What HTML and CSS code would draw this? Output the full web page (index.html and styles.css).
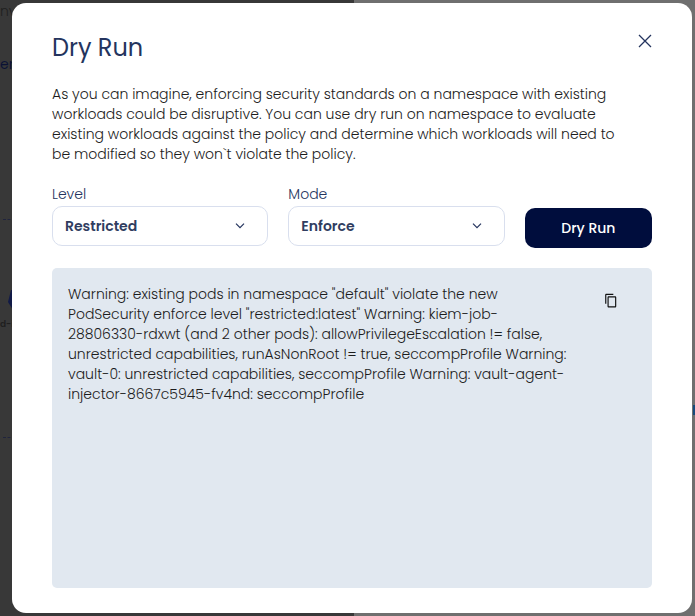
FILE: index.html
```html
<!DOCTYPE html>
<html lang="en">
<head>
<meta charset="utf-8">
<meta name="viewport" content="width=device-width, initial-scale=1">
<title>Dry Run</title>
<link rel="stylesheet" href="styles.css">
</head>
<body>
<div class="backdrop" aria-hidden="true">
  <span class="peek peek-env">nv</span>
  <span class="peek peek-users">ers</span>
  <span class="dash dash-top"></span>
  <svg class="hex" width="16" height="20" viewBox="0 0 16 20"><path d="M3 0h13v20H5L0 12z" fill="#111a47"/></svg>
  <span class="peek peek-node">d-in</span>
  <span class="dash dash-bottom"></span>
  <span class="marker"></span>
</div>
<main class="modal" role="dialog" aria-labelledby="title">
  <header class="modal-header">
    <h1 id="title">Dry Run</h1>
    <button class="icon-button close" type="button" aria-label="Close">
      <svg width="14" height="14" viewBox="0 0 14 14" fill="none" stroke="#24345e" stroke-width="1.3"><path d="M1 1l12 12M13 1L1 13"/></svg>
    </button>
  </header>
  <p class="intro">As you can imagine, enforcing security standards on a namespace with existing<br>
    workloads could be disruptive. You can use dry run on namespace to evaluate<br>
    existing workloads against the policy and determine which workloads will need to<br>
    be modified so they won`t violate the policy.</p>
  <form class="controls">
    <div class="field">
      <label for="level">Level</label>
      <div class="select">
        <select id="level"><option>Restricted</option></select>
        <svg class="chevron" width="10" height="6" viewBox="0 0 10 6" fill="none" stroke="#24345e" stroke-width="1.2"><path d="M1 .7l4 4 4-4"/></svg>
      </div>
    </div>
    <div class="field">
      <label for="mode">Mode</label>
      <div class="select">
        <select id="mode"><option>Enforce</option></select>
        <svg class="chevron" width="10" height="6" viewBox="0 0 10 6" fill="none" stroke="#24345e" stroke-width="1.2"><path d="M1 .7l4 4 4-4"/></svg>
      </div>
    </div>
    <button class="run" type="button">Dry Run</button>
  </form>
  <section class="output">
    <p>Warning: existing pods in namespace "default" violate the new<br>
      PodSecurity enforce level "restricted:latest" Warning: kiem-job-<br>
      28806330-rdxwt (and 2 other pods): allowPrivilegeEscalation != false,<br>
      unrestricted capabilities, runAsNonRoot != true, seccompProfile Warning:<br>
      vault-0: unrestricted capabilities, seccompProfile Warning: vault-agent-<br>
      injector-8667c5945-fv4nd: seccompProfile</p>
    <button class="icon-button" type="button" aria-label="Copy">
      <svg width="14" height="15" viewBox="0 0 24 24" preserveAspectRatio="none"><path fill="#111" d="M16 1H4C2.900 1 2 1.900 2 3v14h2V3h12V1zm3 4H8C6.900 5 6 5.900 6 7v14c0 1.100.9 2 2 2h11c1.100 0 2-.9 2-2V7c0-1.100-.9-2-2-2zm0 16H8V7h11v14z"/></svg>
    </button>
  </section>
</main>
</body>
</html>
```
FILE: styles.css
```css
* {
  box-sizing: border-box;
}

body {
  margin: 0;
  padding: 3px 3px 3px 12px;
  font-family: Poppins, Inter, sans-serif;
  font-size: 14px;
  line-height: 20px;
  font-weight: 300;
  color: #1c1c1c;
}

h1,
p {
  margin: 0;
}

button,
select {
  font: inherit;
}

.backdrop {
  position: fixed;
  inset: 0;
  z-index: -1;
  overflow: hidden;
  background: linear-gradient(to right, #383838 51%, #6f6f6f 51%);
}

.peek {
  position: absolute;
  left: 0;
  color: #1f1f1f;
}

.peek-env {
  top: 1px;
}

.peek-users {
  top: 54px;
  font-weight: 400;
  color: #0b1235;
}

.peek-node {
  top: 314px;
  font-size: 9px;
  font-weight: 600;
}

.dash {
  position: absolute;
  left: 3px;
  width: 12px;
  border-top: 1px dashed #20243d;
}

.dash-top {
  top: 219px;
}

.dash-bottom {
  top: 437px;
}

.hex {
  position: absolute;
  top: 290px;
  left: 8px;
}

.marker {
  position: absolute;
  top: 405px;
  right: 0;
  width: 2px;
  height: 10px;
  background: #174a7c;
}

.modal {
  padding: 28px 40px 25px;
  border-radius: 14px;
  background: #fff;
}

.modal-header {
  display: flex;
  justify-content: space-between;
  align-items: flex-start;
  margin-bottom: 19px;
}

h1 {
  font-size: 24px;
  line-height: 34px;
  font-weight: 400;
  color: #24345e;
}

.icon-button {
  display: flex;
  padding: 0;
  border: 0;
  background: none;
  cursor: pointer;
}

.close {
  margin-top: 3px;
}

.intro {
  margin-bottom: 20px;
  white-space: nowrap;
}

.controls {
  display: grid;
  grid-template-columns: 1.7fr 1.7fr 1fr;
  align-items: end;
  gap: 20px;
  margin-bottom: 20px;
}

.field {
  display: grid;
  gap: 2px;
  padding-bottom: 2px;
}

label {
  color: #24345e;
}

.select {
  display: grid;
  align-items: center;
}

select {
  grid-area: 1 / 1;
  width: 100%;
  height: 40px;
  padding: 0 12px;
  border: 1px solid #d9dfee;
  border-radius: 10px;
  background: #fff;
  color: #303d60;
  font-weight: 600;
  appearance: none;
}

.chevron {
  grid-area: 1 / 1;
  justify-self: end;
  margin-right: 23px;
  pointer-events: none;
}

.run {
  height: 40px;
  border: 0;
  border-radius: 10px;
  background: #000d3d;
  color: #fff;
  font-weight: 500;
  cursor: pointer;
}

.output {
  display: flex;
  justify-content: space-between;
  align-items: flex-start;
  min-height: 320px;
  padding: 16px 34px 16px 16px;
  border-radius: 5px;
  background: #e1e8f0;
}

.output p {
  white-space: nowrap;
}

.output .icon-button {
  margin-top: 9px;
}
```
